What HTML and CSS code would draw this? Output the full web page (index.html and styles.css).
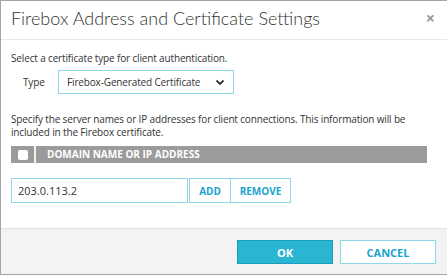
FILE: index.html
```html
<!doctype html>
<html lang="en">
<head>
	<meta charset="UTF-8" />
	<title>Firebox Address and Certificate Settings</title>
<link rel="stylesheet" href="styles.css">
</head>
<body>
	<section class="dialog">
		<header class="dialog-head">
			<h1>Firebox Address and Certificate Settings</h1>
			<span class="close">&times;</span>
		</header>
		<div class="dialog-body">
			<p class="intro">Select a certificate type for client authentication.</p>
			<div class="type-row">
				<label>Type</label>
				<div class="select">
					<span>Firebox-Generated Certificate</span>
					<svg width="10" height="7" viewBox="0 0 10 7"><path d="M1.5 1.5 L5 5 L8.5 1.5" fill="none" stroke="#333" stroke-width="1.8"/></svg>
				</div>
			</div>
			<p class="desc">Specify the server names or IP addresses for client connections. This information will be included in the Firebox certificate.</p>
			<div class="grid-head">
				<div class="check-cell"><span class="box"></span></div>
				<div class="name-cell">DOMAIN NAME OR IP ADDRESS</div>
			</div>
			<div class="add-row">
				<div class="field">203.0.113.2</div>
				<a href="javascript:;" class="btn-line">ADD</a>
				<a href="javascript:;" class="btn-line">REMOVE</a>
			</div>
		</div>
		<footer class="dialog-foot">
			<a href="javascript:;" class="btn ok">OK</a>
			<a href="javascript:;" class="btn cancel">CANCEL</a>
		</footer>
	</section>
</body>
</html>
```

FILE: styles.css
```css
*{
	margin: 0;
	padding: 0;
	box-sizing: border-box;
}
body{
	font-family: "Open Sans", "Noto Sans", sans-serif;
	color: #333;
}
.dialog{
	width: 447px;
	height: 275px;
	border: 1px solid #a4a4a4;
	border-right: none;
	display: flex;
	flex-direction: column;
	background: #fff;
}
.dialog-head{
	height: 39px;
	border-bottom: 1px solid #e8e8e8;
	display: flex;
	align-items: center;
	justify-content: space-between;
	padding: 0 12px 4px 10px;
}
.dialog-head h1{
	font-family: "Lato", sans-serif;
	font-weight: 300;
	font-size: 18px;
	color: #333;
}
.close{
	font-size: 16px;
	color: #999;
	font-weight: bold;
}
.dialog-body{
	flex: 1;
	padding: 10px 10px 0;
	font-size: 10px;
	letter-spacing: -0.15px;
}
.intro{
	line-height: 16px;
}
.type-row{
	display: flex;
	align-items: center;
	margin: 4px 0 0 12px;
}
.type-row label{
	width: 35px;
}
.select{
	width: 176px;
	height: 24px;
	border: 1px solid #8fd8ea;
	display: flex;
	align-items: center;
	justify-content: space-between;
	padding: 0 8px 0 8px;
	white-space: nowrap;
}
.desc{
	margin-top: 19px;
	line-height: 13px;
}
.grid-head{
	display: flex;
	height: 17px;
	margin-top: 7px;
	width: 416px;
	background: #9b9b9b;
}
.check-cell{
	width: 25px;
	border-right: 2px solid #f0f0f0;
	display: flex;
	align-items: center;
	justify-content: center;
}
.box{
	width: 10px;
	height: 10px;
	background: #fff;
	border-radius: 2px;
}
.name-cell{
	padding-left: 11px;
	color: #fff;
	font-weight: bold;
	font-size: 10px;
	letter-spacing: 0;
	line-height: 17px;
}
.add-row{
	display: flex;
	margin-top: 15px;
	height: 25px;
}
.field{
	width: 177px;
	border: 1px solid #8fd8ea;
	padding-left: 6px;
	line-height: 23px;
	font-size: 11px;
	letter-spacing: 0;
	margin-right: 1px;
}
.btn-line{
	border: 1px solid #8fd8ea;
	color: #1aa3cf;
	font-weight: bold;
	font-size: 10px;
	letter-spacing: 0;
	text-decoration: none;
	display: flex;
	align-items: center;
	justify-content: center;
}
.btn-line:first-of-type{
	width: 41px;
	border-right: none;
}
.btn-line:last-of-type{
	width: 61px;
}
.dialog-foot{
	height: 46px;
	background: #f3f3f3;
	border-top: 1px solid #e2e2e2;
	display: flex;
	justify-content: flex-end;
	align-items: flex-start;
	gap: 7px;
	padding: 11px 11px 0 0;
}
.btn{
	width: 96px;
	height: 24px;
	font-size: 11px;
	font-weight: bold;
	text-decoration: none;
	display: flex;
	align-items: center;
	justify-content: center;
}
.ok{
	background: #2ab6d3;
	border: 1px solid #1d9dbb;
	color: #fff;
}
.cancel{
	background: #fff;
	border: 1px solid #8fd8ea;
	color: #1aa3cf;
}
```
